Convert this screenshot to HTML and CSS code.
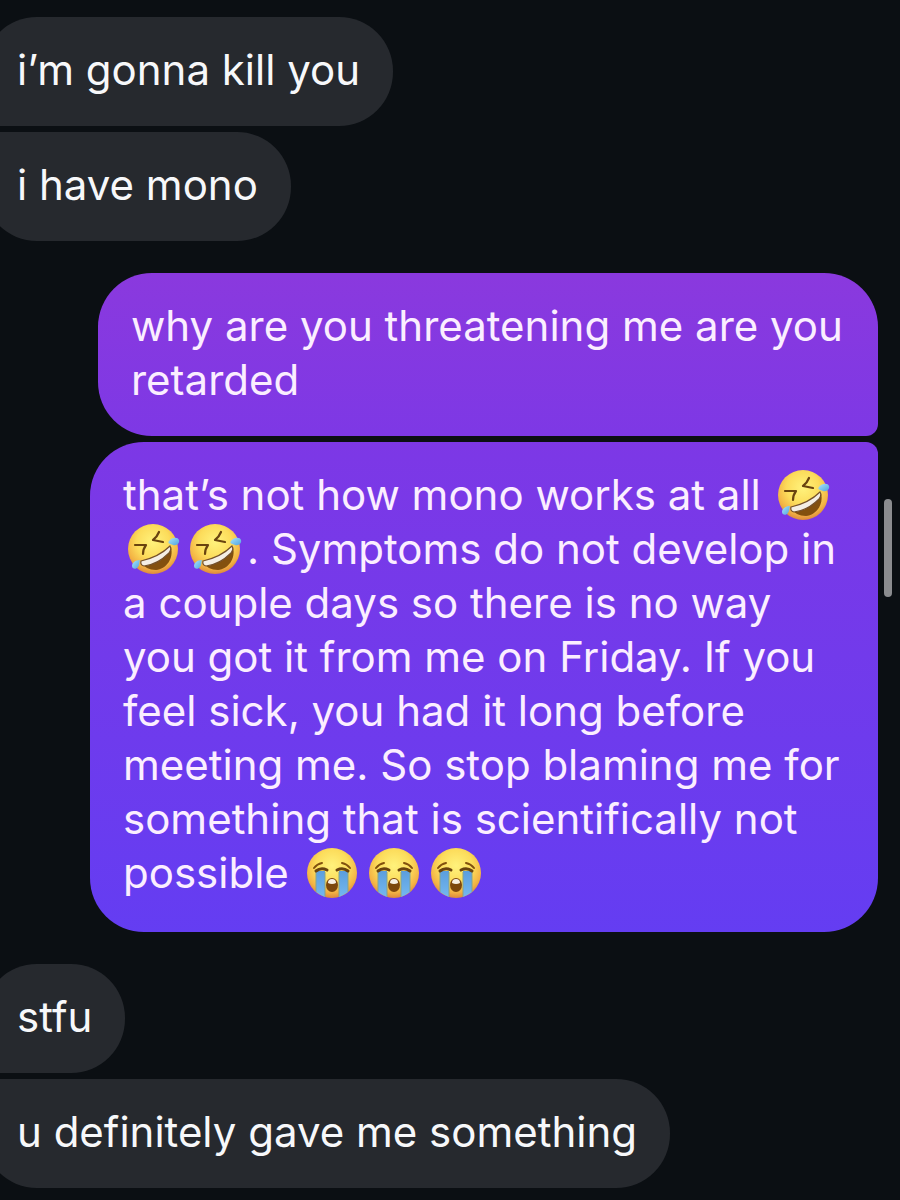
FILE: index.html
```html
<!DOCTYPE html>
<html lang="en">
<head>
<meta charset="UTF-8">
<meta name="viewport" content="width=device-width, initial-scale=1">
<title>Chat</title>
<link rel="stylesheet" href="styles.css">
</head>
<body>

<svg class="defs" aria-hidden="true">
<defs>
<radialGradient id="face" cx="0.5" cy="0.36" r="0.66">
<stop offset="0" stop-color="#fff27c"/>
<stop offset="0.5" stop-color="#fcdc5b"/>
<stop offset="0.8" stop-color="#f3b344"/>
<stop offset="1" stop-color="#d9813c"/>
</radialGradient>
<linearGradient id="tear" x1="0" y1="0" x2="0" y2="1">
<stop offset="0" stop-color="#5b9ede"/>
<stop offset="1" stop-color="#74b8f0"/>
</linearGradient>
<linearGradient id="drop" x1="0" y1="0" x2="1" y2="1">
<stop offset="0" stop-color="#a9e3fa"/>
<stop offset="1" stop-color="#4fa3df"/>
</linearGradient>
</defs>
<symbol id="rofl" viewBox="0 0 62 52">
<circle cx="30" cy="26" r="25" fill="url(#face)"/>
<path d="M12 22L23 22Q20 26 20 31M36 9Q34 14 30 17Q35 18 40 19" fill="none" stroke="#69430f" stroke-width="2.2" stroke-linecap="round" stroke-linejoin="round"/>
<path d="M18 39C31 37 40 32 48 24C51 36 43 46 33 47C26 47 21 44 18 39z" fill="#83500f"/>
<path d="M18 38C31 35 40 30 47 23Q49 26 46 30C39 37 31 42 21 43Q17 42 18 38z" fill="#f4eee5" stroke="#74502a" stroke-width="1.2"/>
<path d="M46 18C49 14 55 14 56 17C57 20 54 23 50 22C47 21 44 20 46 18z" fill="url(#drop)"/>
<path d="M17 37C12 37 9 40 9 43C9 46 13 47 15 44C17 41 16 39 17 37z" fill="url(#drop)"/>
</symbol>
<symbol id="sob" viewBox="0 0 62 52">
<circle cx="31" cy="26" r="25" fill="url(#face)"/>
<path d="M15 24h9v26Q19 48 15 45zM38 24h9v21Q43 48 38 50z" fill="url(#tear)"/>
<path d="M15 25v20M24 25v25M38 25v25M47 25v20" stroke="#85a38d" stroke-width="1"/>
<path d="M13 21Q16 17 21 16M41 16Q46 17 49 21" fill="none" stroke="#80500e" stroke-width="2" stroke-linecap="round"/>
<path d="M15 24Q20 20 26 23M36 23Q42 20 47 24" fill="none" stroke="#69430f" stroke-width="3" stroke-linecap="round"/>
<ellipse cx="31" cy="38" rx="6" ry="7" fill="#7c470d"/>
<path d="M27 36Q27 32 31 32T35 36Q31 38 27 36z" fill="#f7efe2"/>
</symbol>
</svg>

<main class="thread">
<div class="group received">
<p class="bubble">i’m gonna kill you</p>
<p class="bubble">i have mono</p>
</div>

<div class="group sent">
<p class="bubble short">why are you threatening me are you retarded</p>
<p class="bubble">that’s not how mono works at all <svg class="emoji" role="img" aria-label="rolling on the floor laughing"><use href="#rofl"/></svg><br><svg class="emoji" role="img" aria-label="rolling on the floor laughing"><use href="#rofl"/></svg><svg class="emoji" role="img" aria-label="rolling on the floor laughing"><use href="#rofl"/></svg>. Symptoms do not develop in<br>a couple days so there is no way<br>you got it from me on Friday. If you<br>feel sick, you had it long before<br>meeting me. So stop blaming me for<br>something that is scientifically not<br>possible <svg class="emoji" role="img" aria-label="loudly crying"><use href="#sob"/></svg><svg class="emoji" role="img" aria-label="loudly crying"><use href="#sob"/></svg><svg class="emoji" role="img" aria-label="loudly crying"><use href="#sob"/></svg></p>
</div>

<div class="group received">
<p class="bubble">stfu</p>
<p class="bubble">u definitely gave me something</p>
</div>
</main>

<div class="scrollbar"></div>

</body>
</html>
```
FILE: styles.css
```css
* { box-sizing: border-box; }
body {
    margin: 0;
    background: #0b0f13;
    color: #f7f8fa;
    font-family: Inter, "Liberation Sans", sans-serif;
    font-size: 42px;
    line-height: 54px;
    overflow-x: hidden;
}
.defs { position: absolute; width: 0; height: 0; }

.thread {
    display: flex;
    flex-direction: column;
    gap: 32px;
    padding: 17px 22px 13px 0;
}
.group {
    display: flex;
    flex-direction: column;
    gap: 6px;
}
.bubble {
    margin: 0;
    padding: 26px 33px 29px;
    border-radius: 54px;
}

/* the left edge of the incoming bubbles runs off screen */
.received { align-items: flex-start; margin-left: -17px; }
.received .bubble { background: #26292e; padding-left: 34px; }
.received .bubble:first-child { border-bottom-left-radius: 12px; }
.received .bubble:last-child { border-top-left-radius: 12px; }

/* one gradient shared by all the outgoing bubbles */
.sent { align-items: flex-end; }
.sent .bubble {
    max-width: 788px;
    padding-right: 20px;
    background: linear-gradient(#8a39de 23%, #7c38e6 38%, #643df2 78%) fixed;
    color: #fbeeff;
}
.sent .short { max-width: 780px; }
.sent .bubble:first-child { border-bottom-right-radius: 12px; }
.sent .bubble:last-child {
    width: 788px;
    padding-bottom: 32px;
    border-top-right-radius: 12px;
}

.emoji { width: 62px; height: 52px; vertical-align: -11px; }

.scrollbar {
    position: fixed;
    top: 499px;
    right: 8px;
    width: 8px;
    height: 98px;
    border-radius: 4px;
    background: #8b8c8f;
}
```
